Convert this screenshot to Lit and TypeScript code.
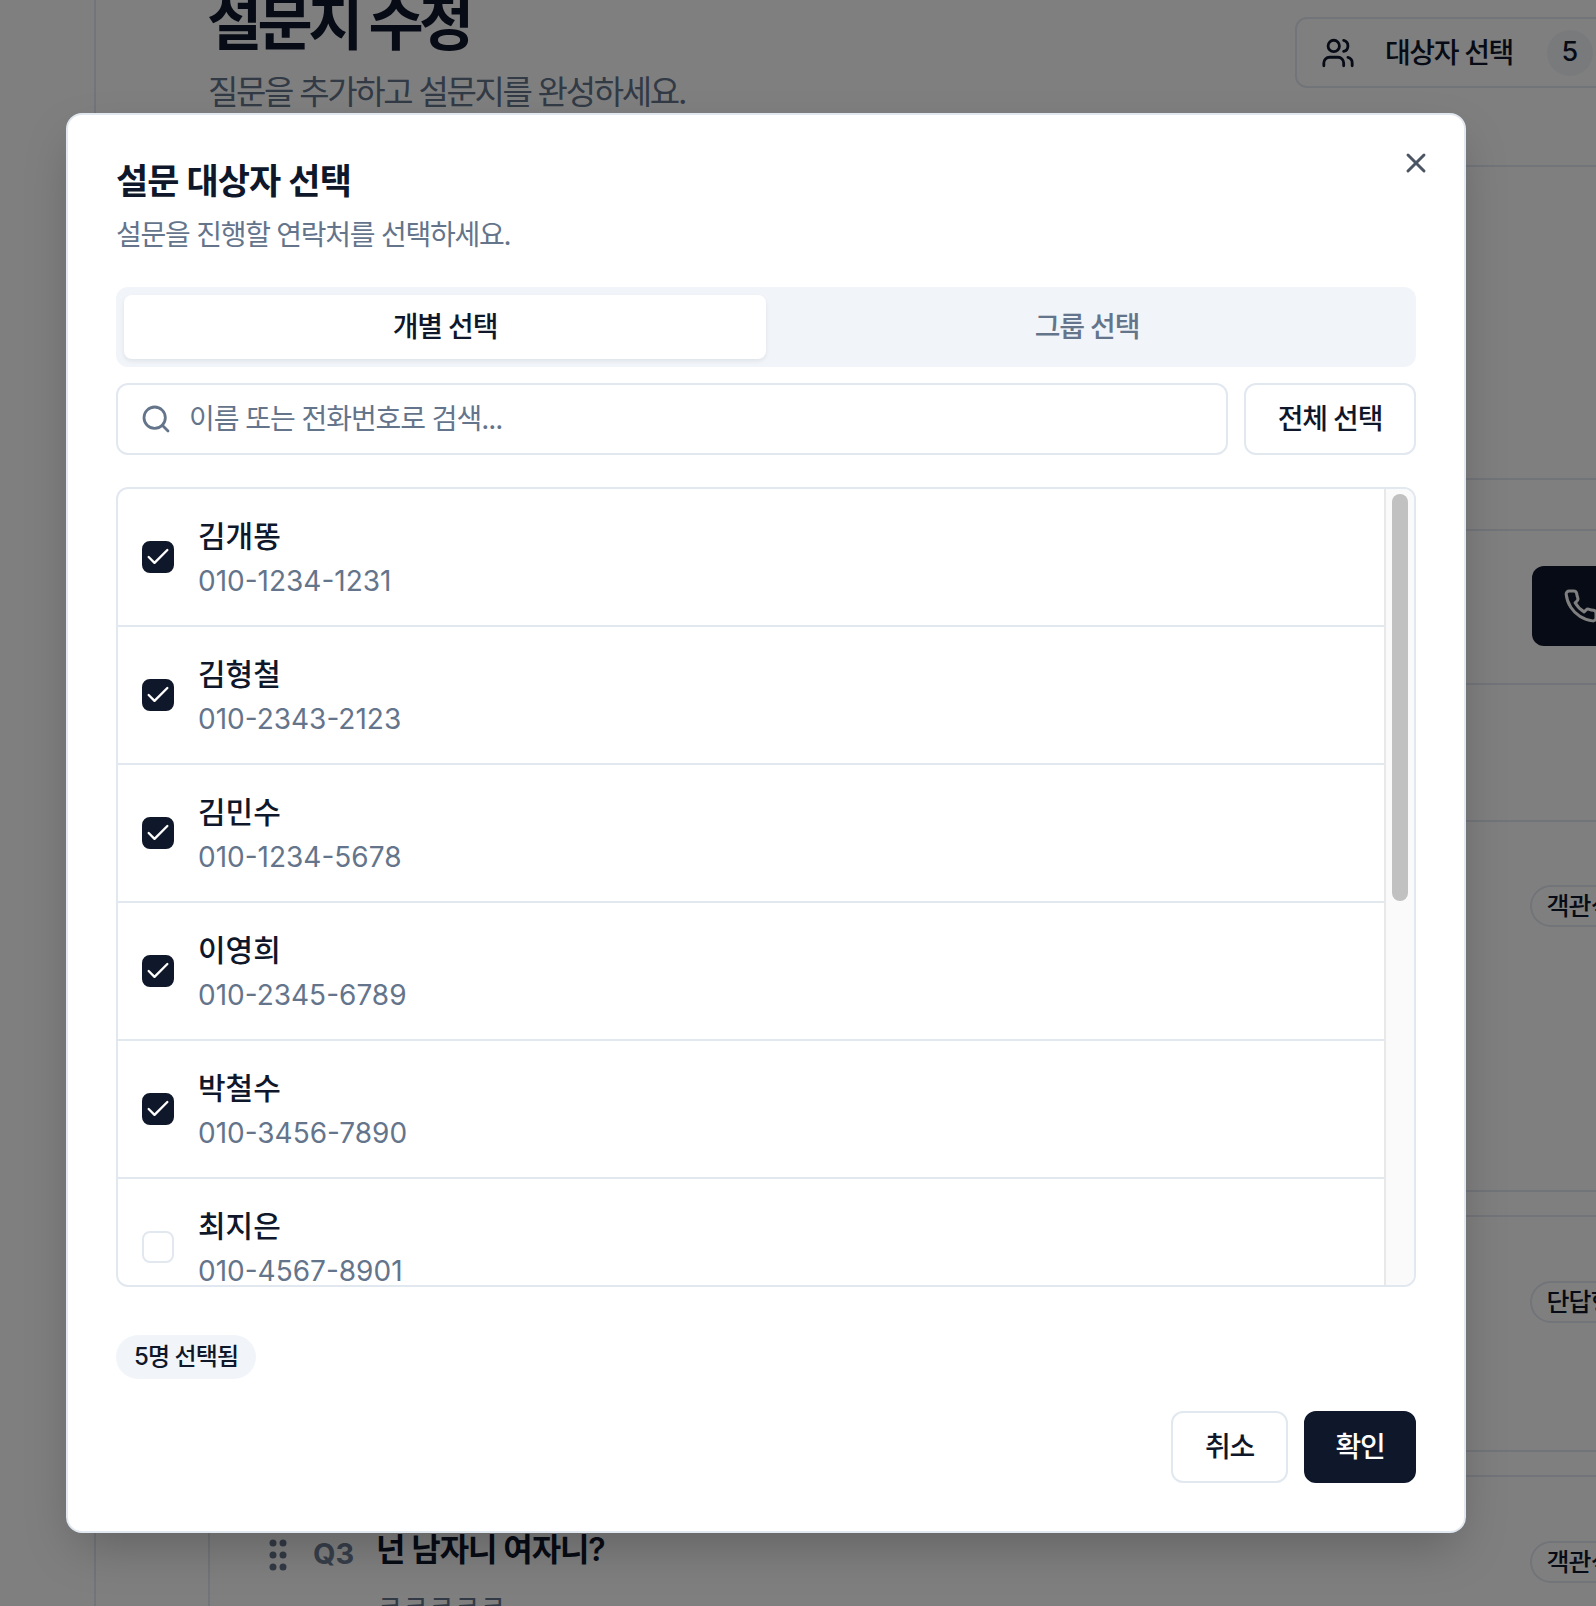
import { LitElement, html, css, svg } from 'lit';
import { customElement, state } from 'lit/decorators.js';
import { classMap } from 'lit/directives/class-map.js';

const contacts = [
  { name: '김개똥', phone: '010-1234-1231', checked: true },
  { name: '김형철', phone: '010-2343-2123', checked: true },
  { name: '김민수', phone: '010-1234-5678', checked: true },
  { name: '이영희', phone: '010-2345-6789', checked: true },
  { name: '박철수', phone: '010-3456-7890', checked: true },
  { name: '최지은', phone: '010-4567-8901', checked: false },
];

const icon = (size: number, body: unknown, width = 2) => html`
  <svg width=${size} height=${size} viewBox="0 0 24 24" fill="none" stroke="currentColor"
    stroke-width=${width} stroke-linecap="round" stroke-linejoin="round">${body}</svg>
`;

const usersIcon = svg`
  <path d="M16 21v-2a4 4 0 0 0-4-4H6a4 4 0 0 0-4 4v2"/>
  <circle cx="9" cy="7" r="4"/>
  <path d="M22 21v-2a4 4 0 0 0-3-3.87"/>
  <path d="M16 3.13a4 4 0 0 1 0 7.75"/>
`;
const phoneIcon = svg`
  <path d="M22 16.92v3a2 2 0 0 1-2.18 2 19.79 19.79 0 0 1-8.63-3.07 19.5 19.5 0 0 1-6-6 19.79 19.79 0 0 1-3.07-8.67A2 2 0 0 1 4.11 2h3a2 2 0 0 1 2 1.72 12.84 12.84 0 0 0 .7 2.81 2 2 0 0 1-.45 2.11L8.09 9.91a16 16 0 0 0 6 6l1.27-1.27a2 2 0 0 1 2.11-.45 12.84 12.84 0 0 0 2.81.7A2 2 0 0 1 22 16.92z"/>
`;
const searchIcon = svg`<circle cx="11" cy="11" r="8"/><path d="m21 21-4.3-4.3"/>`;
const closeIcon = svg`<path d="M18 6 6 18"/><path d="m6 6 12 12"/>`;
const checkIcon = svg`<path d="M20 6 9 17l-5-5"/>`;

@customElement('app-root')
export class AppRoot extends LitElement {
  static styles = css`
    :host {
      display: block;
      position: relative;
      height: 1606px;
      overflow: hidden;
      background: #fff;
      color: #0f172a;
      font-family: Inter, 'Noto Sans CJK KR', sans-serif;
    }

    /* page behind the dialog */
    .page {
      display: flex;
      height: 100%;
    }
    .rail {
      flex: none;
      width: 94px;
      border-right: 2px solid #e2e8f0;
    }
    .main {
      flex: none;
      width: 1593px;
      padding-left: 112px;
      box-sizing: border-box;
    }
    .head {
      display: flex;
      height: 165px;
    }
    .head-text {
      flex: none;
      width: 1087px;
      margin-top: -13px;
    }
    .head-text h1 {
      margin: 0 0 0 -1px;
      height: 72px;
      font-size: 60px;
      line-height: 72px;
      font-weight: 700;
      letter-spacing: -4.6px;
    }
    .head-text p {
      margin: 11px 0 0;
      font-size: 33px;
      line-height: 44px;
      letter-spacing: -2.3px;
      color: #64748b;
    }
    .pick {
      display: flex;
      align-items: center;
      flex: none;
      width: 340px;
      height: 71px;
      margin-top: 17px;
      padding-left: 24px;
      box-sizing: border-box;
      border: 2px solid #e2e8f0;
      border-radius: 12px;
    }
    .pick span {
      margin-left: 30px;
      padding-bottom: 3px;
      font-size: 28px;
      font-weight: 500;
      letter-spacing: -1.4px;
    }
    .pick b {
      display: flex;
      align-items: center;
      justify-content: center;
      width: 46px;
      height: 46px;
      margin-left: 34px;
      padding-bottom: 2px;
      box-sizing: border-box;
      border-radius: 50%;
      background: #f1f5f9;
      font-size: 27px;
      font-weight: 500;
    }
    .card {
      border: 2px solid #e2e8f0;
      border-right: 0;
      border-radius: 12px 0 0 12px;
    }
    .card + .card {
      margin-top: 23px;
    }
    .card-a {
      height: 311px;
      margin-bottom: 49px;
    }
    .sec {
      display: flex;
      justify-content: flex-end;
      padding-right: 54px;
    }
    .sec-1 {
      height: 117px;
      padding-top: 35px;
    }
    .sec-2 {
      height: 135px;
      border-top: 2px solid #e2e8f0;
      border-bottom: 2px solid #e2e8f0;
    }
    .sec-3 {
      height: 305px;
      padding-top: 63px;
    }
    .call {
      display: flex;
      align-items: center;
      width: 103px;
      height: 80px;
      padding-left: 31px;
      box-sizing: border-box;
      border-radius: 12px;
      background: #0f172a;
      color: #fff;
    }
    .chip {
      flex: none;
      height: 42px;
      margin-right: 5px;
      padding: 0 15px 0 14px;
      box-sizing: border-box;
      border: 2px solid #e2e8f0;
      border-radius: 22px;
      font-size: 25px;
      line-height: 38px;
      font-weight: 500;
      letter-spacing: -0.8px;
      white-space: nowrap;
    }
    .card-c {
      height: 233px;
    }
    .card-c .sec {
      padding-top: 64px;
    }
    .card-d {
      display: flex;
      justify-content: space-between;
      height: 200px;
      padding: 64px 54px 0 0;
      box-sizing: border-box;
    }
    .q {
      display: flex;
      margin-top: -11px;
    }
    .q svg {
      margin: 9px 0 0 59px;
    }
    .q-no {
      width: 63px;
      margin-left: 26px;
      padding-top: 6px;
      font-size: 29px;
      line-height: 36px;
      font-weight: 700;
      color: #6f7f96;
    }
    .q-title {
      margin: 0;
      font-size: 32px;
      line-height: 40px;
      font-weight: 600;
      letter-spacing: -1.1px;
    }
    .q-sub {
      margin: 16px 0 0 1px;
      font-size: 28px;
      line-height: 40px;
      color: #64748b;
    }

    .scrim {
      position: absolute;
      inset: 0;
      background: rgba(0, 0, 0, 0.5);
    }

    /* dialog */
    .dialog {
      position: absolute;
      left: 66px;
      top: 113px;
      width: 1400px;
      height: 1420px;
      padding: 48px;
      box-sizing: border-box;
      border: 2px solid #e2e8f0;
      border-radius: 16px;
      background: #fff;
      box-shadow: 0 20px 50px -10px rgba(0, 0, 0, 0.25);
    }
    .close {
      position: absolute;
      top: 32px;
      right: 32px;
      display: flex;
      padding: 0;
      border: 0;
      background: none;
      color: #4b5563;
    }
    .dialog h2 {
      margin: 0;
      font-size: 35px;
      line-height: 36px;
      font-weight: 600;
      letter-spacing: -0.9px;
    }
    .desc {
      margin: 16px 0 32px;
      font-size: 28px;
      line-height: 40px;
      letter-spacing: -1.25px;
      color: #64748b;
    }
    .tabs {
      display: grid;
      grid-template-columns: 1fr 1fr;
      height: 80px;
      padding: 8px;
      box-sizing: border-box;
      border-radius: 12px;
      background: #f1f5f9;
    }
    .tab {
      display: flex;
      align-items: center;
      justify-content: center;
      padding-bottom: 4px;
      box-sizing: border-box;
      border-radius: 8px;
      font-size: 28px;
      font-weight: 500;
      letter-spacing: -1.2px;
      color: #64748b;
    }
    .tab.on {
      background: #fff;
      color: #0f172a;
      box-shadow: 0 2px 4px rgba(15, 23, 42, 0.08);
    }
    .tools {
      display: flex;
      gap: 16px;
      margin-top: 16px;
    }
    .search {
      display: flex;
      flex: 1;
      align-items: center;
      gap: 17px;
      height: 72px;
      padding-left: 22px;
      box-sizing: border-box;
      border: 2px solid #e2e8f0;
      border-radius: 12px;
      font-size: 28px;
      letter-spacing: -1.05px;
      color: #64748b;
    }
    .search span {
      padding-bottom: 4px;
    }
    .btn {
      display: flex;
      align-items: center;
      justify-content: center;
      height: 72px;
      padding-bottom: 4px;
      box-sizing: border-box;
      border: 2px solid #e2e8f0;
      border-radius: 12px;
      background: #fff;
      font-size: 28px;
      font-weight: 500;
      letter-spacing: -1.2px;
    }
    .btn.all {
      width: 172px;
    }
    .btn.cancel {
      width: 117px;
    }
    .btn.ok {
      width: 112px;
      border-color: #0f172a;
      background: #0f172a;
      color: #fff;
    }
    .list {
      display: flex;
      height: 800px;
      margin-top: 32px;
      box-sizing: border-box;
      border: 2px solid #e2e8f0;
      border-radius: 12px;
      overflow: hidden;
    }
    .rows {
      flex: 1;
      overflow: hidden;
    }
    .row {
      display: flex;
      align-items: center;
      gap: 24px;
      height: 138px;
      padding-left: 24px;
      box-sizing: border-box;
      border-bottom: 2px solid #e2e8f0;
    }
    .row:last-child {
      border-bottom-color: transparent;
    }
    .who {
      padding-top: 3px;
    }
    .box {
      display: flex;
      align-items: center;
      justify-content: center;
      width: 32px;
      height: 32px;
      box-sizing: border-box;
      border: 2px solid #e2e8f0;
      border-radius: 8px;
      color: #fff;
    }
    .box.on {
      border-color: #0f172a;
      background: #0f172a;
    }
    .name {
      font-size: 30px;
      line-height: 40px;
      font-weight: 500;
    }
    .phone {
      margin-top: 5px;
      font-size: 28px;
      line-height: 40px;
      color: #64748b;
    }
    .bar {
      flex: none;
      width: 30px;
      padding: 5px 6px;
      box-sizing: border-box;
      border-left: 2px solid #e8e8e8;
      background: #fafafa;
    }
    .thumb {
      width: 16px;
      height: 407px;
      border-radius: 8px;
      background: #c1c1c1;
    }
    .count {
      display: inline-block;
      height: 44px;
      margin-top: 48px;
      padding: 0 18px;
      border-radius: 22px;
      background: #f1f5f9;
      font-size: 24px;
      line-height: 44px;
      font-weight: 500;
      letter-spacing: -0.9px;
    }
    .actions {
      display: flex;
      justify-content: flex-end;
      gap: 16px;
      margin-top: 32px;
    }
  `;

  @state() private people = contacts;

  private renderRow(p: (typeof contacts)[number]) {
    return html`
      <div class="row">
        <span class=${classMap({ box: true, on: p.checked })}>
          ${p.checked ? icon(28, checkIcon) : ''}
        </span>
        <div class="who">
          <div class="name">${p.name}</div>
          <div class="phone">${p.phone}</div>
        </div>
      </div>
    `;
  }

  render() {
    const picked = this.people.filter((p) => p.checked).length;
    return html`
      <div class="page">
        <div class="rail"></div>
        <div class="main">
          <div class="head">
            <div class="head-text">
              <h1>설문지 수정</h1>
              <p>질문을 추가하고 설문지를 완성하세요.</p>
            </div>
            <div class="pick">
              ${icon(34, usersIcon)}
              <span>대상자 선택</span>
              <b>${picked}</b>
            </div>
          </div>
          <div class="card card-a"></div>
          <div class="card">
            <div class="sec sec-1">
              <div class="call">${icon(36, phoneIcon)}</div>
            </div>
            <div class="sec sec-2"></div>
            <div class="sec sec-3"><span class="chip">객관식</span></div>
          </div>
          <div class="card card-c">
            <div class="sec"><span class="chip">단답형</span></div>
          </div>
          <div class="card card-d">
            <div class="q">
              <svg width="18" height="32" viewBox="0 0 18 32" fill="#64748b">
                <circle cx="4" cy="4" r="3.5" /><circle cx="14" cy="4" r="3.5" />
                <circle cx="4" cy="16" r="3.5" /><circle cx="14" cy="16" r="3.5" />
                <circle cx="4" cy="28" r="3.5" /><circle cx="14" cy="28" r="3.5" />
              </svg>
              <span class="q-no">Q3</span>
              <div>
                <p class="q-title">넌 남자니 여자니?</p>
                <p class="q-sub">ㅋㅋㅋㅋㅋ</p>
              </div>
            </div>
            <span class="chip">객관식</span>
          </div>
        </div>
      </div>
      <div class="scrim"></div>
      <div class="dialog">
        <button class="close">${icon(32, closeIcon, 2.2)}</button>
        <h2>설문 대상자 선택</h2>
        <p class="desc">설문을 진행할 연락처를 선택하세요.</p>
        <div class="tabs">
          <div class="tab on">개별 선택</div>
          <div class="tab">그룹 선택</div>
        </div>
        <div class="tools">
          <div class="search">
            ${icon(32, searchIcon, 2.1)}
            <span>이름 또는 전화번호로 검색...</span>
          </div>
          <div class="btn all">전체 선택</div>
        </div>
        <div class="list">
          <div class="rows">${this.people.map((p) => this.renderRow(p))}</div>
          <div class="bar"><div class="thumb"></div></div>
        </div>
        <span class="count">${picked}명 선택됨</span>
        <div class="actions">
          <div class="btn cancel">취소</div>
          <div class="btn ok">확인</div>
        </div>
      </div>
    `;
  }
}
